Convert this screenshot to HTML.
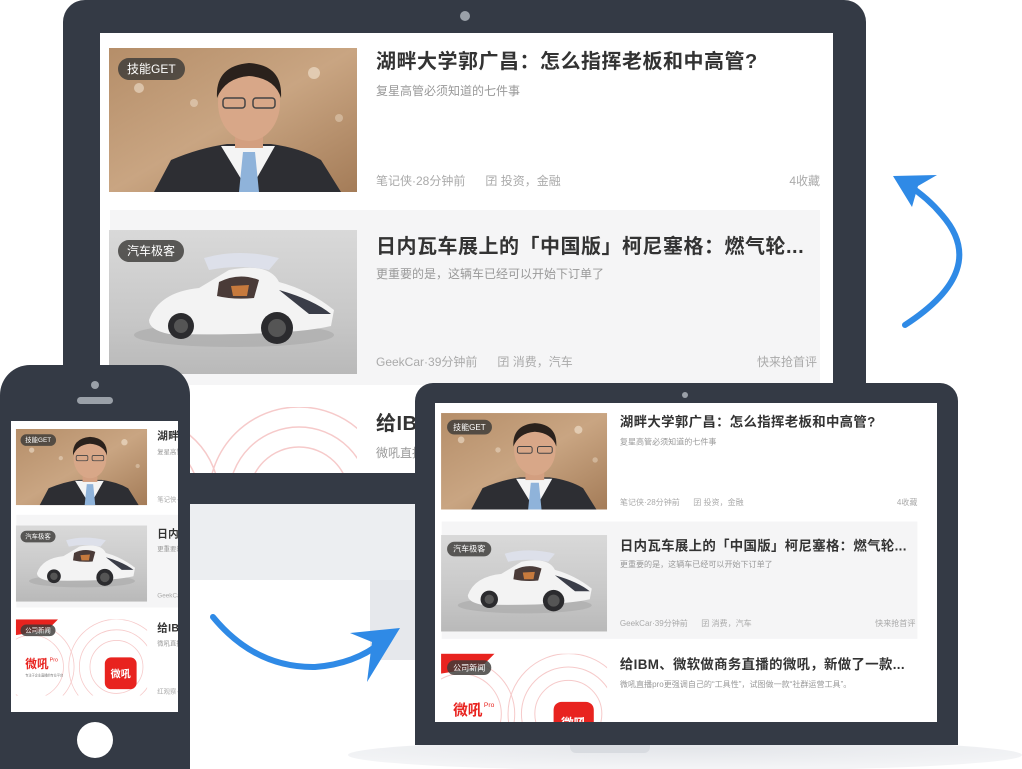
<!DOCTYPE html>
<html><head><meta charset="utf-8">
<style>
*{margin:0;padding:0;box-sizing:border-box}
body{width:1022px;height:769px;background:#fff;position:relative;overflow:hidden;font-family:"Liberation Sans","Noto Sans CJK SC",sans-serif}
.abs{position:absolute}
.dark{background:#343a45}
.content{position:absolute;left:0;top:0;width:733px;height:560px;background:#fff;transform-origin:0 0}
.card{position:absolute;left:0;width:733px}
.img{position:absolute;left:9px;width:248px;height:144px;overflow:hidden}
.img svg{display:block}
.tag{position:absolute;left:9px;top:10px;height:22px;line-height:22px;padding:0 9px;border-radius:11px;background:rgba(60,58,56,.82);color:#fff;font-size:12px}
.t{position:absolute;left:276px;font-size:20px;font-weight:bold;color:#333;white-space:nowrap;letter-spacing:.5px}
.s{position:absolute;left:276px;font-size:12px;color:#999;white-space:nowrap}
.m{position:absolute;left:276px;font-size:12px;color:#aaa;white-space:nowrap}
.m b{font-weight:normal;margin-left:20px}
.r{position:absolute;right:13px;font-size:12px;color:#aaa}
.screen{position:absolute;overflow:hidden;background:#fff}
</style></head><body>

<svg width="0" height="0" style="position:absolute">
<defs>
<linearGradient id="wood" x1="0" y1="0" x2="1" y2="1"><stop offset="0" stop-color="#b58e69"/><stop offset=".5" stop-color="#c9a582"/><stop offset="1" stop-color="#a47c58"/></linearGradient>
<linearGradient id="floor" x1="0" y1="0" x2="0" y2="1"><stop offset="0" stop-color="#d9d9d9"/><stop offset=".6" stop-color="#c8c8c8"/><stop offset="1" stop-color="#b9b9b9"/></linearGradient>
<radialGradient id="base" cx=".5" cy=".3" r=".6"><stop offset="0" stop-color="#e4e6ea"/><stop offset="1" stop-color="#f3f4f6"/></radialGradient>
<symbol id="man" viewBox="0 0 248 144" preserveAspectRatio="none">
<rect width="248" height="144" fill="url(#wood)"/>
<circle cx="30" cy="40" r="5" fill="#e8d6c0" opacity=".7"/><circle cx="205" cy="25" r="6" fill="#ecdcc6" opacity=".7"/><circle cx="85" cy="55" r="4" fill="#e8d6c0" opacity=".6"/><circle cx="230" cy="70" r="4" fill="#e8d6c0" opacity=".5"/>
<path d="M45 144 L62 112 Q90 100 118 96 L162 96 Q192 100 212 112 L232 144Z" fill="#2d2e33"/>
<path d="M112 98 L140 144 L166 98Z" fill="#f4f4f4"/>
<path d="M134 104 L146 104 L150 144 L130 144Z" fill="#8fb3da"/>
<rect x="126" y="78" width="28" height="22" fill="#d39f80"/>
<ellipse cx="140" cy="55" rx="31" ry="38" fill="#d8a788"/>
<path d="M108 50 Q106 18 140 15 Q174 17 172 50 Q166 30 140 28 Q116 30 108 50Z" fill="#2a211c"/>
<rect x="114" y="50" width="22" height="10" rx="3" fill="none" stroke="#444" stroke-width="1.5"/><rect x="144" y="50" width="22" height="10" rx="3" fill="none" stroke="#444" stroke-width="1.5"/>
</symbol>
<symbol id="car" viewBox="0 0 248 144" preserveAspectRatio="none">
<rect width="248" height="144" fill="url(#floor)"/>
<ellipse cx="125" cy="105" rx="100" ry="12" fill="#a9a9a9" opacity=".6"/>
<path d="M40 90 Q50 62 90 58 L120 40 Q160 32 170 52 Q200 60 225 80 L222 96 Q180 106 60 104 Q40 100 40 90Z" fill="#f3f3f3"/>
<path d="M95 28 Q130 18 170 28 L160 40 Q130 34 100 40Z" fill="#dde0ea"/>
<path d="M110 52 Q130 42 150 50 L145 68 Q125 70 108 66Z" fill="#4a3b38"/>
<path d="M122 56 L140 55 L138 66 L124 66Z" fill="#c77a3d"/>
<path d="M170 60 Q205 70 222 84 L200 84 Z" fill="#3a3d48"/>
<circle cx="72" cy="96" r="13" fill="#2b2b2e"/><circle cx="72" cy="96" r="7" fill="#555"/>
<circle cx="168" cy="98" r="16" fill="#2b2b2e"/><circle cx="168" cy="98" r="9" fill="#555"/>
</symbol>
<symbol id="wh" viewBox="0 0 248 144" preserveAspectRatio="none">
<rect width="248" height="144" fill="#fff"/>
<g fill="none" stroke="#f6caca" stroke-width="1.5">
<circle cx="190" cy="90" r="50"/><circle cx="190" cy="90" r="70"/><circle cx="190" cy="90" r="90"/><circle cx="30" cy="90" r="60"/><circle cx="30" cy="90" r="80"/>
</g>
<path d="M0 0 L80 0 L60 20 L0 30Z" fill="#e8231f"/>
<text x="18" y="92" font-family="Liberation Sans,Noto Sans CJK SC,sans-serif" font-size="22" font-weight="bold" fill="#e8231f">微吼</text>
<text x="64" y="80" font-family="Liberation Sans,sans-serif" font-size="10" fill="#e8231f">Pro</text>
<text x="18" y="108" font-family="Liberation Sans,Noto Sans CJK SC,sans-serif" font-size="6" fill="#777">专注于企业直播的专业平台</text>
<rect x="168" y="72" width="60" height="60" rx="12" fill="#e8231f"/>
<text x="198" y="110" text-anchor="middle" font-family="Liberation Sans,Noto Sans CJK SC,sans-serif" font-size="19" font-weight="bold" fill="#fff">微吼</text>
</symbol>
</defs>
</svg>

<!-- Monitor -->
<div class="abs dark" style="left:63px;top:0;width:803px;height:504px;border-radius:22px 22px 0 0"></div>
<div class="abs" style="left:460px;top:11px;width:10px;height:10px;border-radius:5px;background:#9aa0a8"></div>
<div class="abs" style="left:190px;top:504px;width:230px;height:76px;background:#eceef1"></div>
<div class="abs" style="left:370px;top:580px;width:50px;height:80px;background:#e6e8ec"></div>

<div class="screen" style="left:100px;top:33px;width:733px;height:440px">
 <div class="content" id="c1">
  <div class="card" style="top:0;height:167px">
   <div class="img" style="top:15px"><svg width="248" height="144"><use href="#man"/></svg><div class="tag">技能GET</div></div>
   <div class="t" style="top:12px">湖畔大学郭广昌：怎么指挥老板和中高管?</div>
   <div class="s" style="top:49px">复星高管必须知道的七件事</div>
   <div class="m" style="top:139px">笔记侠·28分钟前<b>囝 投资，金融</b></div>
   <div class="r" style="top:139px">4收藏</div>
  </div>
  <div class="card" style="top:177px;height:175px;left:10px;width:710px;background:#f5f5f6">
   <div class="img" style="top:20px;left:-1px"><svg width="248" height="144"><use href="#car"/></svg><div class="tag">汽车极客</div></div>
   <div class="t" style="top:20px;left:266px">日内瓦车展上的「中国版」柯尼塞格：燃气轮...</div>
   <div class="s" style="top:55px;left:266px">更重要的是，这辆车已经可以开始下订单了</div>
   <div class="m" style="top:143px;left:266px">GeekCar·39分钟前<b>囝 消费，汽车</b></div>
   <div class="r" style="top:143px;right:3px">快来抢首评</div>
  </div>
  <div class="card" style="top:362px;height:190px">
   <div class="img" style="top:12px"><svg width="248" height="144"><use href="#wh"/></svg><div class="tag">公司新闻</div></div>
   <div class="t" style="top:12px">给IBM、微软做商务直播的微吼，新做了一款...</div>
   <div class="s" style="top:49px">微吼直播pro更强调自己的“工具性”，试图做一款“社群运营工具”。</div>
   <div class="m" style="top:139px">红观察·1小时前<b>囝 企业服务</b></div>
   <div class="r" style="top:139px">快来抢首评</div>
  </div>
 </div>
</div>

<!-- Laptop -->
<svg class="abs" style="left:348px;top:735px" width="674" height="34"><ellipse cx="337" cy="20" rx="337" ry="16" fill="url(#base)"/></svg>
<div class="abs dark" style="left:415px;top:383px;width:543px;height:362px;border-radius:18px 18px 0 0"></div>
<div class="abs" style="left:570px;top:745px;width:80px;height:8px;border-radius:0 0 6px 6px;background:#d8dbe0"></div>
<div class="abs" style="left:682px;top:392px;width:6px;height:6px;border-radius:3px;background:#9aa0a8"></div>
<div class="screen" id="s2" style="left:435px;top:403px;width:502px;height:319px"></div>

<!-- Phone -->
<div class="abs dark" style="left:0;top:365px;width:190px;height:404px;border-radius:30px 30px 0 0"></div>
<div class="abs" style="left:91px;top:381px;width:8px;height:8px;border-radius:4px;background:#9aa0a8"></div>
<div class="abs" style="left:77px;top:397px;width:36px;height:7px;border-radius:4px;background:#9aa0a8"></div>
<div class="abs" style="left:77px;top:722px;width:36px;height:36px;border-radius:50%;background:#fff"></div>
<div class="screen" id="s3" style="left:11px;top:421px;width:167px;height:291px"></div>

<!-- Arrows -->
<svg class="abs" style="left:0;top:0" width="1022" height="769">
<path d="M905 325 Q990 270 942 215 Q928 198 908 185" fill="none" stroke="#2f8ae6" stroke-width="6" stroke-linecap="round"/>
<path d="M893 176 L937 175 L918 186 L912 207Z" fill="#2f8ae6"/>
<path d="M213 617 Q255 668 315 667 Q355 664 382 642" fill="none" stroke="#2f8ae6" stroke-width="6" stroke-linecap="round"/>
<path d="M400 628 L350 633 L372 642 L367 682Z" fill="#2f8ae6"/>
</svg>

<script>
var c=document.getElementById('c1');
[['s2',0.67],['s3',0.53]].forEach(function(p){var n=c.cloneNode(true);n.removeAttribute('id');n.style.transform='scale('+p[1]+')';document.getElementById(p[0]).appendChild(n);});
</script>
</body></html>
